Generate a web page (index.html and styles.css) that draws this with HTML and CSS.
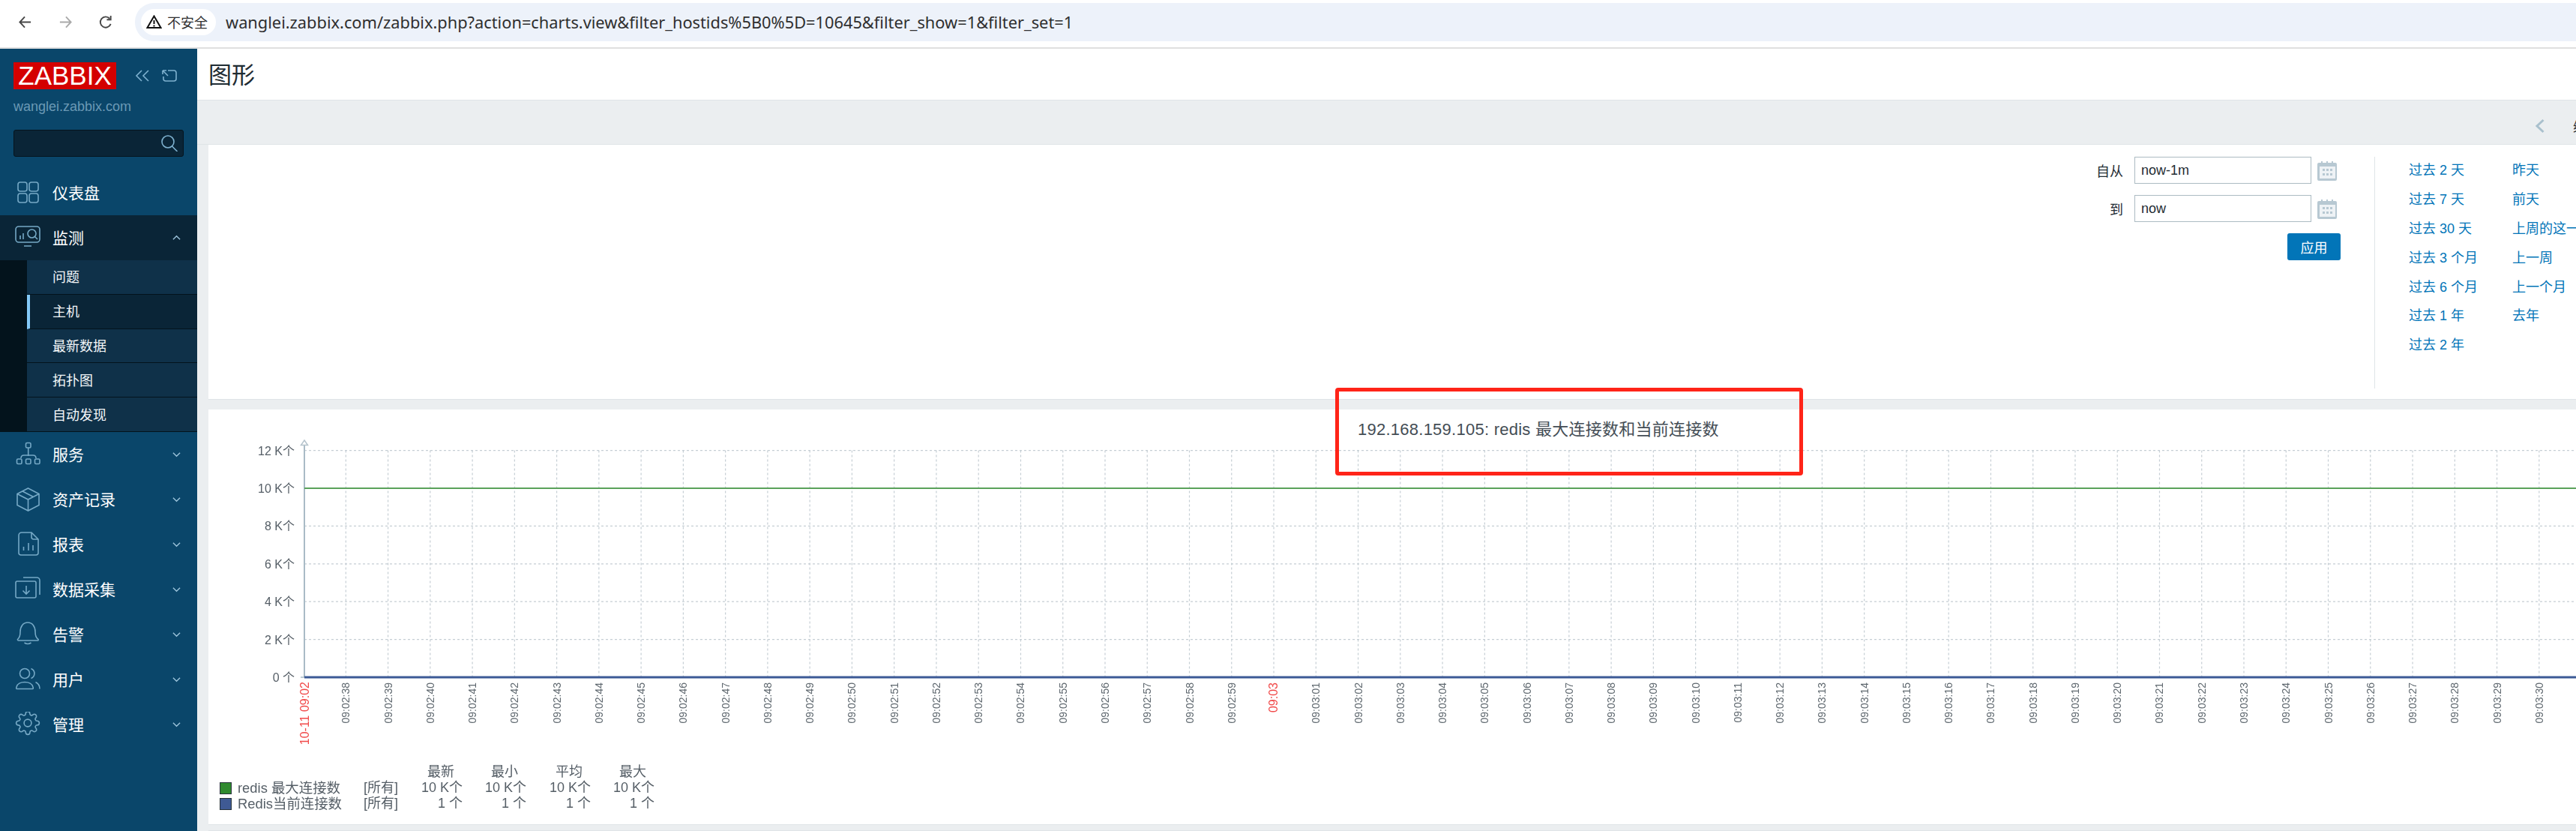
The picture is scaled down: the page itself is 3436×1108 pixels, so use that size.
FILE: index.html
```html
<!DOCTYPE html>
<html lang="zh-CN">
<head>
    <meta charset="UTF-8">
    <title>图形</title>
    <link rel="stylesheet" href="styles.css">
</head>
<body>

    <!-- browser toolbar -->
    <header class="browser-bar">
        <svg class="browser-btn" viewBox="0 0 20 20"><path d="M18 10H3M9.5 2.5 2.5 10l7 7.5"/></svg>
        <svg class="browser-btn browser-btn-off" viewBox="0 0 20 20"><path d="M2 10h15M10.5 2.5l7 7.5-7 7.5"/></svg>
        <svg class="browser-btn" viewBox="0 0 20 20"><path d="M16.5 12.5A7.5 7.5 0 1 1 15 5M16.5 1v5.5H11"/></svg>
        <div class="address">
            <div class="security-chip">
                <svg class="warn-icon" viewBox="0 0 20 18"><path d="M10 1.5 19 17H1z"/><path d="M10 7v5M10 13.5v2"/></svg>
                <span>不安全</span>
            </div>
            <span class="url">wanglei.zabbix.com/zabbix.php?action=charts.view&amp;filter_hostids%5B0%5D=10645&amp;filter_show=1&amp;filter_set=1</span>
        </div>
    </header>

    <div class="app">
        <aside class="sidebar">
            <div class="brand">
                <div class="logo">ZABBIX</div>
                <svg class="brand-icon brand-icon-collapse" viewBox="0 0 20 16"><path d="M9 1 2 8l7 7M18 1l-7 7 7 7"/></svg>
                <svg class="brand-icon brand-icon-kiosk" viewBox="0 0 20 16"><path d="M8 1h8a3 3 0 0 1 3 3v8a3 3 0 0 1-3 3H5a3 3 0 0 1-3-3V9M1 1l7 7M1 1h5M1 1v5"/></svg>
            </div>
            <div class="host-name">wanglei.zabbix.com</div>
            <div class="search-box">
                <svg class="search-icon" viewBox="0 0 24 22"><circle cx="10" cy="9" r="8"/><path d="m15.5 15 7 7"/></svg>
            </div>

            <nav class="menu">
                <a class="menu-item">
                    <svg class="menu-icon" viewBox="0 0 34 34"><rect x="4" y="3" width="12" height="12" rx="3"/><rect x="19" y="3" width="12" height="12" rx="3"/><rect x="4" y="18" width="12" height="12" rx="3"/><rect x="19" y="18" width="12" height="12" rx="3"/></svg>
                    <span>仪表盘</span>
                </a>
                <a class="menu-item menu-item-open">
                    <svg class="menu-icon" viewBox="0 0 34 34"><rect x="1" y="2" width="32" height="21" rx="4"/><path d="M12 28h10M7 14v5M11 11v8"/><circle cx="22.5" cy="11.5" r="5.5"/><path d="m26.5 15.5 3.5 3.5"/></svg>
                    <span>监测</span>
                    <svg class="chevron" viewBox="0 0 12 8"><path d="m1 6.5 5-5 5 5"/></svg>
                </a>
                <div class="submenu">
                    <a class="submenu-item">问题</a>
                    <a class="submenu-item submenu-item-active">主机</a>
                    <a class="submenu-item">最新数据</a>
                    <a class="submenu-item">拓扑图</a>
                    <a class="submenu-item">自动发现</a>
                </div>
                <a class="menu-item">
                    <svg class="menu-icon" viewBox="0 0 34 34"><rect x="14.5" y="1.5" width="6.5" height="6.5" rx="1.5"/><path d="M17.7 8v11M8 22c0-2.500 1.500-4 4-4h12c2.500 0 4 1.500 4 4"/><rect x="2.500" y="23" width="6.500" height="6.500" rx="1.500"/><rect x="14.500" y="23" width="6.500" height="6.500" rx="1.500"/><rect x="26.500" y="23" width="6.500" height="6.500" rx="1.500"/></svg>
                    <span>服务</span>
                    <svg class="chevron" viewBox="0 0 12 8"><path d="m1 1.500 5 5 5-5"/></svg>
                </a>
                <a class="menu-item">
                    <svg class="menu-icon" viewBox="0 0 34 34"><path d="M17.500 2 32 9.500v15L17.500 32 3 24.500v-15zM3 9.500 17.500 17 32 9.500M17.500 17v15M10 6l14.500 7.500"/></svg>
                    <span>资产记录</span>
                    <svg class="chevron" viewBox="0 0 12 8"><path d="m1 1.500 5 5 5-5"/></svg>
                </a>
                <a class="menu-item">
                    <svg class="menu-icon" viewBox="0 0 34 34"><path d="M9 1h13l9 9v18a3 3 0 0 1-3 3H8a3 3 0 0 1-3-3V5a4 4 0 0 1 4-4zM22 1v6a3 3 0 0 0 3 3h6M11.500 20v5M18 15v10M24 18v7"/></svg>
                    <span>报表</span>
                    <svg class="chevron" viewBox="0 0 12 8"><path d="m1 1.500 5 5 5-5"/></svg>
                </a>
                <a class="menu-item">
                    <svg class="menu-icon" viewBox="0 0 34 34"><rect x="1" y="6" width="27" height="22" rx="2"/><path d="M11 1h18a4 4 0 0 1 4 4v19M15 12v11M10.500 18.500 15 23l4.500-4.500"/></svg>
                    <span>数据采集</span>
                    <svg class="chevron" viewBox="0 0 12 8"><path d="m1 1.500 5 5 5-5"/></svg>
                </a>
                <a class="menu-item">
                    <svg class="menu-icon" viewBox="0 0 34 34"><path d="M3.500 23.500c2.500-2 3.500-5 3.500-10C7 6 11 1 17 1s10 5 10 12.500c0 5 1 8 4 10 .5.500 0 1.500-.5 1.500h-26c-.7 0-1.300-1-1-1.500zM12.500 28q4.500 3 9 0"/></svg>
                    <span>告警</span>
                    <svg class="chevron" viewBox="0 0 12 8"><path d="m1 1.500 5 5 5-5"/></svg>
                </a>
                <a class="menu-item">
                    <svg class="menu-icon" viewBox="0 0 34 34"><circle cx="13" cy="9" r="6.500"/><path d="M21.500 2.500a7 7 0 0 1 0 13M2.500 29.500c-1 0-.8-1.500-.5-2.500 1-4 5.500-6.500 11-6.500s10 2.500 11 6.500c.3 1 .5 2.500-.5 2.500zM27.500 20.500c3 1.500 5.500 4.500 5.500 9"/></svg>
                    <span>用户</span>
                    <svg class="chevron" viewBox="0 0 12 8"><path d="m1 1.500 5 5 5-5"/></svg>
                </a>
                <a class="menu-item">
                    <svg class="menu-icon" viewBox="0 0 34 34"><g transform="translate(.2 -1.800) scale(1.400)" stroke-width="1.150"><circle cx="12" cy="12" r="3.500"/><path d="M19.400 15a1.650 1.650 0 0 0 .33 1.820l.06.06a2 2 0 0 1 0 2.830 2 2 0 0 1-2.830 0l-.06-.06a1.650 1.650 0 0 0-1.820-.33 1.650 1.650 0 0 0-1 1.510V21a2 2 0 0 1-2 2 2 2 0 0 1-2-2v-.09A1.650 1.650 0 0 0 9 19.400a1.650 1.650 0 0 0-1.820.33l-.06.06a2 2 0 0 1-2.830 0 2 2 0 0 1 0-2.830l.06-.06a1.650 1.650 0 0 0 .33-1.820 1.650 1.650 0 0 0-1.510-1H3a2 2 0 0 1-2-2 2 2 0 0 1 2-2h.09A1.650 1.650 0 0 0 4.600 9a1.650 1.650 0 0 0-.33-1.820l-.06-.06a2 2 0 0 1 0-2.830 2 2 0 0 1 2.830 0l.06.06a1.650 1.650 0 0 0 1.820.33H9a1.650 1.650 0 0 0 1-1.510V3a2 2 0 0 1 2-2 2 2 0 0 1 2 2v.09a1.650 1.650 0 0 0 1 1.510 1.650 1.650 0 0 0 1.820-.33l.06-.06a2 2 0 0 1 2.830 0 2 2 0 0 1 0 2.830l-.06.06a1.650 1.650 0 0 0-.33 1.820V9a1.650 1.650 0 0 0 1.510 1H21a2 2 0 0 1 2 2 2 2 0 0 1-2 2h-.09a1.650 1.650 0 0 0-1.510 1z"/></g></svg>
                    <span>管理</span>
                    <svg class="chevron" viewBox="0 0 12 8"><path d="m1 1.500 5 5 5-5"/></svg>
                </a>
            </nav>
        </aside>

        <main class="main">
            <div class="page-title"><h1>图形</h1></div>
            <div class="timeline-bar">
                <svg class="timeline-prev" viewBox="0 0 14 20"><path d="M11.500 2 3 10l8.500 8"/></svg>
                <span class="timeline-zoom">缩小</span>
            </div>

            <div class="content">
                <section class="card filter-card">
                    <form class="filter-form">
                        <div class="filter-row">
                            <label class="filter-label">自从</label>
                            <input class="filter-input" type="text" value="now-1m">
                            <svg class="calendar-icon" viewBox="0 0 27 27"><use href="#calendar"/></svg>
                        </div>
                        <div class="filter-row">
                            <label class="filter-label">到</label>
                            <input class="filter-input" type="text" value="now">
                            <svg class="calendar-icon" viewBox="0 0 27 27"><use href="#calendar"/></svg>
                        </div>
                        <button class="apply-btn" type="button">应用</button>
                    </form>
                    <div class="time-ranges">
                        <ul class="range-col">
                            <li>过去 2 天</li>
                            <li>过去 7 天</li>
                            <li>过去 30 天</li>
                            <li>过去 3 个月</li>
                            <li>过去 6 个月</li>
                            <li>过去 1 年</li>
                            <li>过去 2 年</li>
                        </ul>
                        <ul class="range-col">
                            <li>昨天</li>
                            <li>前天</li>
                            <li>上周的这一天</li>
                            <li>上一周</li>
                            <li>上一个月</li>
                            <li>去年</li>
                        </ul>
                    </div>
                </section>

                <section class="card chart-card">
                    <div class="chart-title">192.168.159.105: redis 最大连接数和当前连接数</div>
                    <svg id="chart" class="chart-plot" width="3158" height="415"></svg>
                    <div class="legend">
                        <div></div><div></div>
                        <div class="legend-head">最新</div><div class="legend-head">最小</div><div class="legend-head">平均</div><div class="legend-head">最大</div>

                        <div class="legend-name"><i class="swatch swatch-green"></i>redis 最大连接数</div><div>[所有]</div>
                        <div class="legend-val">10 K个</div><div class="legend-val">10 K个</div><div class="legend-val">10 K个</div><div class="legend-val">10 K个</div>

                        <div class="legend-name"><i class="swatch swatch-blue"></i>Redis当前连接数</div><div>[所有]</div>
                        <div class="legend-val">1 个</div><div class="legend-val">1 个</div><div class="legend-val">1 个</div><div class="legend-val">1 个</div>
                    </div>
                </section>
                <section class="card next-card"></section>
            </div>
        </main>
    </div>

    <!-- red box drawn over the screenshot -->
    <div class="annotation"></div>

    <svg class="svg-defs" width="0" height="0">
        <symbol id="calendar" viewBox="0 0 27 27">
            <path fill="#b7c8d2" d="M3 3h2V1h2v2h5V1h2v2h5V1h2v2h3a2 2 0 0 1 2 2v20a2 2 0 0 1-2 2H2a2 2 0 0 1-2-2V5a2 2 0 0 1 2-2z"/>
            <rect x="3" y="8" width="21" height="16" fill="#eef2f5"/>
            <path fill="#b7c8d2" d="M7 11h3v3H7zM12 11h3v3h-3zM17 11h3v3h-3zM7 17h3v3H7zM12 17h3v3h-3zM17 17h3v3h-3z"/>
        </symbol>
    </svg>

    <script src="chart.js"></script>
</body>
</html>
```
FILE: styles.css
```css
* {
    margin: 0;
    padding: 0;
    box-sizing: border-box;
}
html, body {
    height: 100%;
    overflow: hidden;
}
body {
    position: relative;
    display: flex;
    flex-direction: column;
    background-color: #fff;
    color: #1f2c33;
    font-family: "Liberation Sans", "Noto Sans CJK SC", sans-serif;
    font-size: 18px;
}

/* browser toolbar */
.browser-bar {
    flex: none;
    display: flex;
    align-items: center;
    height: 65px;
    padding: 3px 0 8px 24px;
    background-color: #fff;
    border-bottom: 2px solid #e0e0e0;
}
.browser-btn {
    flex: none;
    width: 19px;
    height: 19px;
    margin-right: 35px;
    fill: none;
    stroke: #474747;
    stroke-width: 2;
}
.browser-btn-off {
    stroke: #aaa;
}
.address {
    flex: 1;
    display: flex;
    align-items: center;
    height: 51px;
    margin-left: -6px;
    padding-left: 8px;
    background-color: #edf2fa;
    border-radius: 25px 0 0 25px;
}
.security-chip {
    flex: none;
    display: flex;
    align-items: center;
    gap: 7px;
    width: 100px;
    height: 35px;
    padding-left: 7px;
    background-color: #fff;
    border-radius: 18px;
    font-family: "Noto Sans CJK SC", sans-serif;
    color: #303030;
}
.warn-icon {
    width: 21px;
    height: 18px;
    fill: none;
    stroke: #111;
    stroke-width: 2;
}
.url {
    margin-left: 13px;
    font-family: "Noto Sans", "Noto Sans CJK SC", sans-serif;
    font-size: 21.8px;
    color: #2f2f2f;
    white-space: nowrap;
}

.app {
    flex: 1;
    display: flex;
    min-height: 0;
}

/* sidebar */
.sidebar {
    flex: none;
    width: 263px;
    padding-top: 18px;
    background-color: #0a466a;
    font-family: "Noto Sans CJK SC", sans-serif;
}
.brand {
    display: flex;
    align-items: center;
    padding-left: 18px;
}
.logo {
    width: 137px;
    height: 36px;
    background-color: #d40000;
    color: #fff;
    font-family: "Liberation Sans", sans-serif;
    font-size: 35px;
    line-height: 36px;
    text-align: center;
}
.brand-icon {
    width: 20px;
    height: 16px;
    fill: none;
    stroke: #7fb2d0;
    stroke-width: 1.6;
}
.brand-icon-collapse {
    margin-left: 25px;
}
.brand-icon-kiosk {
    margin-left: 16px;
}
.host-name {
    margin: 12px 0 0 18px;
    font-family: "Liberation Sans", sans-serif;
    font-size: 18px;
    line-height: 22px;
    color: #6b99b5;
}
.search-box {
    display: flex;
    align-items: center;
    justify-content: flex-end;
    height: 36px;
    margin: 20px 18px 18px;
    padding-right: 6px;
    background-color: #0a2537;
    border: 1px solid #05131d;
    border-radius: 3px;
}
.search-icon {
    width: 24px;
    height: 22px;
    fill: none;
    stroke: #7fb2d0;
    stroke-width: 1.6;
}
.menu-item {
    display: flex;
    align-items: center;
    height: 60px;
    padding-left: 20px;
    color: #fff;
    font-size: 21px;
}
.menu-item span {
    flex: 1;
    margin-left: 16px;
    padding-bottom: 3px;
}
.menu-item-open {
    background-color: #0a2537;
}
.menu-icon {
    flex: none;
    width: 34px;
    height: 34px;
    fill: none;
    stroke: #76a9c6;
    stroke-width: 1.6;
}
.chevron {
    flex: none;
    width: 11px;
    height: 8px;
    margin-right: 22px;
    fill: none;
    stroke: #9cc4db;
    stroke-width: 1.5;
}
.submenu {
    height: 229px;
    padding-left: 36px;
    background-color: #03131c;
}
.submenu-item {
    display: flex;
    align-items: center;
    height: 45.8px;
    padding: 0 0 2px 34px;
    background-color: #0f3149;
    border-bottom: 1px solid #03131c;
    color: #f2f6f8;
    font-size: 18px;
}
.submenu-item-active {
    padding-left: 30px;
    background-color: #0a2537;
    border-left: 4px solid #84c9f7;
}

/* main area */
.main {
    flex: 1;
    min-width: 0;
    display: flex;
    flex-direction: column;
    background-color: #ebeef0;
    overflow: hidden;
}
.page-title {
    flex: none;
    height: 69px;
    padding: 0 0 3px 15px;
    display: flex;
    align-items: center;
    background-color: #fff;
    border-bottom: 1px solid #dfe4e7;
}
.page-title h1 {
    font-family: "Noto Sans CJK SC", sans-serif;
    font-size: 31px;
    font-weight: 400;
    color: #1f2c33;
}
.timeline-bar {
    flex: none;
    display: flex;
    align-items: center;
    height: 59px;
    margin-right: -40px;
    padding-top: 10px;
    padding-left: 3118px;
    white-space: nowrap;
    border-bottom: 1px solid #dfe4e7;
}
.timeline-prev {
    flex: none;
    width: 14px;
    height: 20px;
    fill: none;
    stroke: #a9c0cd;
    stroke-width: 3;
}
.timeline-zoom {
    margin-left: 37px;
    font-family: "Noto Sans CJK SC", sans-serif;
}
.content {
    flex: 1;
    padding-left: 15px;
    display: flex;
    flex-direction: column;
}
.card {
    flex: none;
    background-color: #fff;
    border-bottom: 1px solid #dfe4e7;
}

/* filter */
.filter-card {
    display: flex;
    justify-content: flex-end;
    height: 340px;
    margin-bottom: 13px;
    padding-top: 16px;
    font-family: "Liberation Sans", "Noto Sans CJK SC", sans-serif;
}
.filter-form {
    display: flex;
    flex-direction: column;
    gap: 15px;
    margin-right: 45px;
}
.filter-row {
    display: flex;
    align-items: center;
}
.filter-label {
    width: 60px;
    margin-right: 15px;
    color: #1f2c33;
    text-align: right;
}
.filter-input {
    width: 236px;
    height: 36px;
    padding: 0 8px;
    border: 1px solid #acbbc2;
    color: #1f2c33;
    font-family: "Liberation Sans", sans-serif;
    font-size: 18px;
}
.calendar-icon {
    width: 27px;
    height: 27px;
    margin: 0 4px 0 8px;
}
.apply-btn {
    align-self: flex-end;
    width: 71px;
    height: 36px;
    background-color: #0275b8;
    border: none;
    border-radius: 3px;
    color: #fff;
    font-family: "Noto Sans CJK SC", sans-serif;
    font-size: 18px;
}
.time-ranges {
    flex: none;
    display: flex;
    width: 269px;
    height: 309px;
    padding-left: 45px;
    border-left: 1px solid #dfe4e7;
    overflow: hidden;
}
.range-col {
    flex: none;
    width: 138px;
    list-style: none;
    color: #0275b8;
    white-space: nowrap;
}
.range-col li {
    height: 36px;
    margin-bottom: 2.9px;
    line-height: 36px;
}

/* chart */
.chart-card {
    height: 554px;
    margin-bottom: 7px;
    padding-top: 15px;
}
.chart-title {
    height: 25px;
    margin-left: 1533px;
    color: #444d55;
    font-size: 22px;
    letter-spacing: 0.25px;
    line-height: 24px;
    white-space: nowrap;
}
.chart-plot {
    display: block;
    font-family: "Liberation Sans", "Noto Sans CJK SC", sans-serif;
    filter: blur(0.4px);
}
.axis-label {
    fill: #555e66;
    font-size: 16px;
}
.tick-label {
    fill: #5f686f;
    font-size: 14px;
}
.tick-label-red {
    fill: #f14a4a;
    font-size: 16px;
}
.legend {
    display: grid;
    grid-template-columns: 192px 47px 85px 85px 86px 85px;
    grid-auto-rows: 21px;
    margin: 18px 0 0 15px;
    color: #555e66;
    font-size: 18px;
    line-height: 21px;
    white-space: nowrap;
    filter: blur(0.3px);
}
.legend-head {
    padding-right: 11px;
    text-align: right;
}
.legend-val {
    text-align: right;
}
.legend-name {
    display: flex;
    align-items: center;
    gap: 8px;
    font-size: 18.4px;
}
.swatch {
    flex: none;
    width: 16px;
    height: 16px;
    border: 1px solid #26323a;
}
.swatch-green {
    background-color: #2f8a2f;
}
.swatch-blue {
    background-color: #3f5a94;
}
.next-card {
    flex: 1;
}

.annotation {
    position: absolute;
    left: 1781px;
    top: 517px;
    width: 624px;
    height: 117px;
    border: 5px solid #ff2418;
    border-radius: 4px;
}
.svg-defs {
    position: absolute;
}
```
FILE: chart.js
```js
// draws the graph into #chart; coordinates below are relative to the svg
const svg = document.getElementById('chart');
const NS = 'http://www.w3.org/2000/svg';

const AXIS_X = 128;
const FIRST_TICK_X = 183.3;
const TICK_STEP = 56.26;
const RIGHT = 3158;
const BOTTOM_Y = 317;
const ROW_STEP = 50.4;
const LABEL_TOP = 324;

function add(name, attrs, text) {
    const el = document.createElementNS(NS, name);
    for (const key in attrs) {
        el.setAttribute(key, attrs[key]);
    }
    if (text) {
        el.textContent = text;
    }
    svg.appendChild(el);
    return el;
}

function gridLine(x1, y1, x2, y2) {
    add('line', { x1, y1, x2, y2, stroke: '#c5ced4', 'stroke-width': 1.2, 'stroke-dasharray': '3 3' });
}

// y axis rows, 12K down to 0
const rows = ['12 K个', '10 K个', '8 K个', '6 K个', '4 K个', '2 K个', '0 个'];
rows.forEach(function(label, i) {
    const y = BOTTOM_Y - (6 - i) * ROW_STEP;
    if (i < 6 && i !== 1) {
        gridLine(AXIS_X, y, RIGHT, y);
    }
    add('text', { x: 115, y: y + 6, 'text-anchor': 'end', class: 'axis-label' }, label);
});

// one tick per second, 09:02:38 to 09:03:30
for (let i = 0; i <= 52; i++) {
    const x = FIRST_TICK_X + i * TICK_STEP;
    gridLine(x, BOTTOM_Y - 6 * ROW_STEP, x, BOTTOM_Y);

    const total = 38 + i;
    const min = total >= 60 ? '03' : '02';
    const sec = String(total % 60).padStart(2, '0');
    const red = total === 60;
    const label = red ? '09:03' : '09:' + min + ':' + sec;
    add('text', {
        x: x + 5,
        y: LABEL_TOP,
        'text-anchor': 'end',
        transform: 'rotate(-90 ' + (x + 5) + ' ' + LABEL_TOP + ')',
        class: red ? 'tick-label-red' : 'tick-label'
    }, label);
}

// first label, with the date
add('text', {
    x: AXIS_X + 6,
    y: LABEL_TOP - 1,
    'text-anchor': 'end',
    transform: 'rotate(-90 ' + (AXIS_X + 6) + ' ' + (LABEL_TOP - 1) + ')',
    class: 'tick-label-red'
}, '10-11 09:02');

// axis and arrow
add('line', { x1: AXIS_X, y1: 6, x2: AXIS_X, y2: BOTTOM_Y, stroke: '#a9bbc6', 'stroke-width': 2 });
add('path', { d: 'M128 1 132.500 7.500H123.500Z', fill: '#fff', stroke: '#b5c3cc', 'stroke-width': 1.5 });
add('line', { x1: AXIS_X - 5, y1: BOTTOM_Y, x2: AXIS_X, y2: BOTTOM_Y, stroke: '#a9bbc6', 'stroke-width': 1.5 });

// data lines
const topY = BOTTOM_Y - 5 * ROW_STEP;
add('line', { x1: AXIS_X, y1: topY, x2: RIGHT, y2: topY, stroke: '#5aa25a', 'stroke-width': 2 });
add('line', { x1: AXIS_X, y1: BOTTOM_Y, x2: RIGHT, y2: BOTTOM_Y, stroke: '#3c5a96', 'stroke-width': 3 });
```
